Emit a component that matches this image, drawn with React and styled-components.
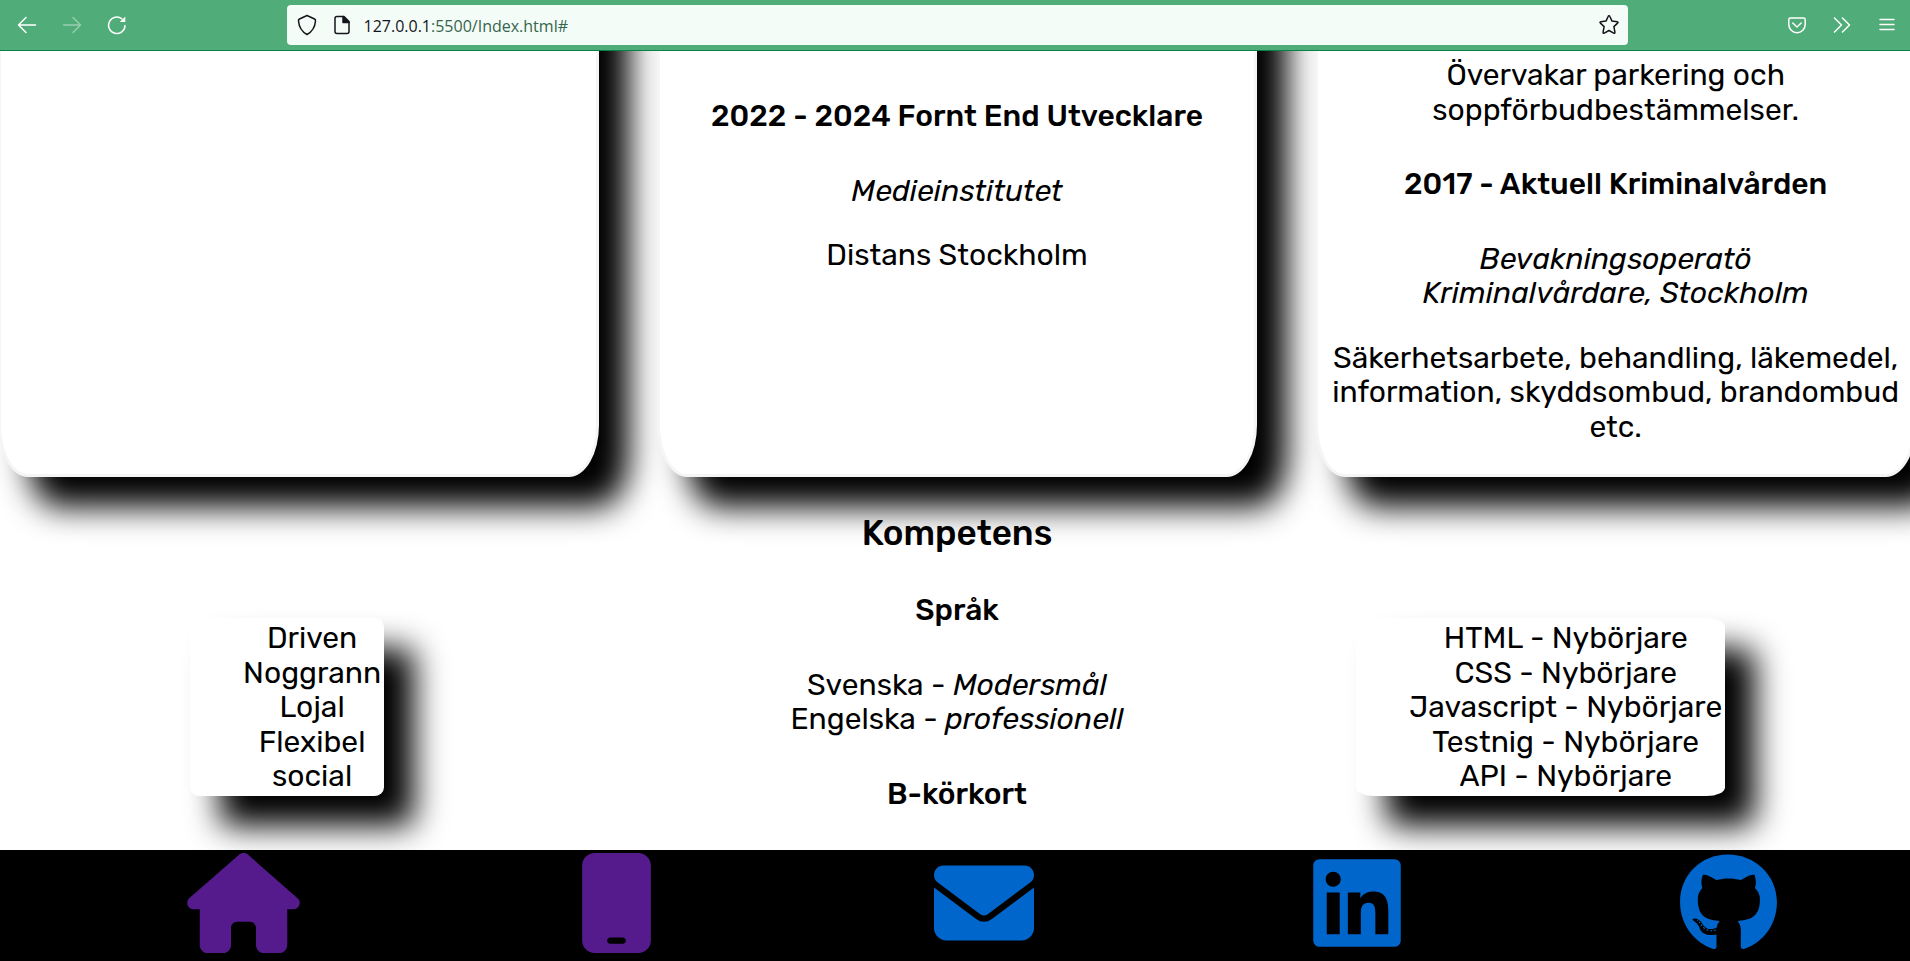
import React from "react";
import styled, { createGlobalStyle } from "styled-components";
import { FaMobile, FaEnvelope, FaLinkedin, FaGithub } from "react-icons/fa6";

const GlobalStyle = createGlobalStyle`
  * { box-sizing: border-box; }
  body {
    margin: 0;
    background: #fff;
    color: #000;
    font-family: Rubik, Inter, "Liberation Sans", sans-serif;
    font-size: 30px;
    line-height: 1.15;
  }
`;

const Window = styled.div`
  display: flex;
  flex-direction: column;
  height: 100vh;
  overflow: hidden;
`;

const Toolbar = styled.header`
  flex: none;
  display: grid;
  grid-template-columns: 15% 1fr 282px;
  height: 51px;
  background: #50ac78;
  border-bottom: 1px solid #0a8043;
  color: #fff;
`;

const ToolGroup = styled.div`
  display: flex;
  align-items: center;
  gap: 21px;
  padding: ${(p) => (p.$end ? "0 11px 0 0" : "0 0 0 15px")};
  justify-content: ${(p) => (p.$end ? "flex-end" : "flex-start")};
`;

const ToolButton = styled.button`
  display: flex;
  align-items: center;
  justify-content: center;
  width: 24px;
  height: 32px;
  padding: 0;
  border: 0;
  background: none;
  color: inherit;
  opacity: ${(p) => (p.disabled ? 0.4 : 1)};
`;

const AddressBar = styled.div`
  display: flex;
  align-items: center;
  gap: 10px;
  height: 40px;
  margin-top: 5px;
  padding: 0 7px;
  border-radius: 4px;
  background: #f4fcf8;
  color: #15141a;
`;

const AddressField = styled.div`
  position: relative;
  flex: 1;
  height: 24px;
  font-family: "Open Sans", "Noto Sans", sans-serif;
  font-size: 16px;
  line-height: 26px;
`;

const AddressInput = styled.input`
  display: block;
  width: 100%;
  padding: 0;
  border: 0;
  outline: 0;
  background: none;
  font: inherit;
`;

const AddressText = styled.div`
  position: absolute;
  inset: 0;
  color: #36654d;
  pointer-events: none;
`;

const Host = styled.span`
  color: #15141a;
`;

const Stroke = styled.svg`
  display: block;
  flex: none;
  fill: none;
  stroke: currentColor;
  stroke-width: 1.5;
  stroke-linecap: round;
  stroke-linejoin: round;
`;

const Main = styled.main`
  flex: 1;
  min-height: 0;
  overflow: hidden;
  text-align: center;
`;

const Cards = styled.section`
  display: grid;
  grid-template-columns: repeat(3, 1fr);
  gap: 58px;
  margin: -614px -6px 0 -2px;
`;

const Card = styled.article`
  min-height: 1040px;
  padding: ${(p) => p.$top}px 10px 0;
  border: 3px solid #f5f5f5;
  border-radius: 5%;
  background: #fff;
  box-shadow: 30px 30px 32px #000;
`;

const Heading = styled.h4`
  margin: 40px 0;
  font-size: inherit;
  font-weight: 500;
`;

const Paragraph = styled.p`
  margin: 30px 0;
`;

const Skills = styled.section`
  display: grid;
  grid-template-columns: 30fr 40fr 21fr 9fr;
  align-items: start;
  margin: 36px -4px 0 0;
`;

const Summary = styled.div`
  grid-column: 2;
`;

const SectionTitle = styled.h3`
  margin: 0;
  font-size: 35px;
  font-weight: 500;
`;

const SkillList = styled.ul`
  justify-self: center;
  margin: 105px 0 0;
  padding: 3px 3px 2px 53px;
  list-style: none;
  border-radius: 5%;
  background: #fff;
  box-shadow: 30px 30px 32px #000;
`;

const Footer = styled.footer`
  flex: none;
  display: flex;
  justify-content: space-between;
  height: 111px;
  padding: 3px 133px 0 187px;
  background: #000;
`;

const FooterLink = styled.a`
  display: block;
  width: ${(p) => p.$width}px;
  height: 100px;
  color: ${(p) => (p.$visited ? "#551a8b" : "#0066cc")};

  svg {
    display: block;
    width: 100%;
    height: 100%;
  }
`;

const House = () => (
  <svg viewBox="0 0 576 512" fill="currentColor">
    <path d="M575.8 255.5c0 18-15 32.1-32 32.1h-32l.7 160.2c0 2.700-.2 5.400-.5 8.100V472c0 22.100-17.900 40-40 40H456c-1.100 0-2.200 0-3.300-.1c-1.400 .1-2.800 .1-4.200 .1H416 392c-22.100 0-40-17.900-40-40V448 384c0-17.700-14.300-32-32-32H256c-17.700 0-32 14.300-32 32v64 24c0 22.100-17.900 40-40 40H160 128.100c-1.500 0-3-.1-4.500-.2c-1.200 .1-2.400 .2-3.600 .2H104c-22.100 0-40-17.900-40-40V360c0-.9 0-1.900 .1-2.800V287.600H32c-18 0-32-14-32-32.100c0-9 3-17 10-24L266.400 8c7-7 15-8 22-8s15 2 21 7L564.800 231.500c8 7 12 15 11 24z" />
  </svg>
);

const traits = ["Driven", "Noggrann", "Lojal", "Flexibel", "social"];
const languages = ["HTML", "CSS", "Javascript", "Testnig", "API"];
const contacts = [
  { label: "Hem", Icon: House, width: 113, visited: true },
  { label: "Telefon", Icon: FaMobile, width: 75, visited: true },
  { label: "E-post", Icon: FaEnvelope, width: 100 },
  { label: "LinkedIn", Icon: FaLinkedin, width: 88 },
  { label: "GitHub", Icon: FaGithub, width: 97 },
];

export default function App() {
  return (
    <Window>
      <GlobalStyle />
      <Toolbar>
        <ToolGroup>
          <ToolButton aria-label="Back">
            <Stroke width="20" height="20" viewBox="0 0 20 20"><path d="M18.500 10H2M9 2.500L1.500 10L9 17.500" /></Stroke>
          </ToolButton>
          <ToolButton aria-label="Forward" disabled>
            <Stroke width="20" height="20" viewBox="0 0 20 20"><path d="M1.500 10H18M11 2.500L18.500 10L11 17.500" /></Stroke>
          </ToolButton>
          <ToolButton aria-label="Reload">
            <Stroke width="20" height="20" viewBox="0 0 20 20"><path d="M18 10.500A8.200 8.200 0 1 1 15 4" /><path d="M18.300 1.500V7H12.800Z" fill="currentColor" stroke="none" /></Stroke>
          </ToolButton>
        </ToolGroup>
        <AddressBar>
          <Stroke width="26" height="24" viewBox="0 0 26 24"><path d="M13 2.500L20.500 6Q21.700 6.600 21.500 8C21 14 18.500 18.500 13 21.500C7.500 18.500 5 14 4.500 8Q4.300 6.600 5.500 6Z" /></Stroke>
          <Stroke width="24" height="24" viewBox="0 0 24 24"><path d="M7 3.500H14L19 8.500V18.500Q19 20.500 17 20.500H7Q5 20.500 5 18.500V5.500Q5 3.500 7 3.500Z" /><path d="M13 3.500V9.500H19Z" fill="currentColor" /></Stroke>
          <AddressField>
            <AddressInput aria-label="Address" defaultValue="" />
            <AddressText><Host>127.0.0.1</Host>:5500/Index.html#</AddressText>
          </AddressField>
          <ToolButton aria-label="Bookmark">
            <Stroke width="22" height="22" viewBox="0 0 22 22"><path d="M11 1.800Q11.600 1.800 11.900 2.500L14 7.100L19.200 7.700Q20.600 8 19.600 9.100L15.900 12.600L16.900 18.200Q17 19.700 15.700 19.100L11 16.500L6.300 19.100Q5 19.700 5.100 18.200L6.100 12.600L2.400 9.100Q1.400 8 2.800 7.700L8 7.100L10.100 2.500Q10.400 1.800 11 1.800Z" /></Stroke>
          </ToolButton>
        </AddressBar>
        <ToolGroup $end>
          <ToolButton aria-label="Save to Pocket">
            <Stroke width="20" height="20" viewBox="0 0 20 20"><path d="M3.500 3H16.500Q18.200 3 18.200 4.700V9.500A8.200 8.200 0 0 1 1.800 9.500V4.700Q1.800 3 3.500 3Z" /><path d="M5.800 8L10 12L14.200 8" /></Stroke>
          </ToolButton>
          <ToolButton aria-label="More tools">
            <Stroke width="20" height="20" viewBox="0 0 20 20"><path d="M2.500 3L9.500 10L2.500 17M10.500 3L17.500 10L10.500 17" /></Stroke>
          </ToolButton>
          <ToolButton aria-label="Menu">
            <Stroke width="20" height="20" viewBox="0 0 20 20"><path d="M3 4.500H17M3 9.500H17M3 14.500H17" /></Stroke>
          </ToolButton>
        </ToolGroup>
      </Toolbar>

      <Main>
        <Cards>
          <Card $top={0} />
          <Card $top={619}>
            <Heading>2022 - 2024 Fornt End Utvecklare</Heading>
            <Paragraph><em>Medieinstitutet</em></Paragraph>
            <Paragraph>Distans Stockholm</Paragraph>
          </Card>
          <Card $top={588}>
            <Paragraph>Övervakar parkering och soppförbudbestämmelser.</Paragraph>
            <Heading>2017 - Aktuell Kriminalvården</Heading>
            <Paragraph><em>Bevakningsoperatö<br />Kriminalvårdare, Stockholm</em></Paragraph>
            <Paragraph>Säkerhetsarbete, behandling, läkemedel, information, skyddsombud, brandombud etc.</Paragraph>
          </Card>
        </Cards>

        <Skills>
          <SkillList>
            {traits.map((trait) => <li key={trait}>{trait}</li>)}
          </SkillList>
          <Summary>
            <SectionTitle>Kompetens</SectionTitle>
            <Heading>Språk</Heading>
            <div>Svenska - <em>Modersmål</em></div>
            <div>Engelska - <em>professionell</em></div>
            <Heading>B-körkort</Heading>
          </Summary>
          <SkillList>
            {languages.map((language) => <li key={language}>{language} - Nybörjare</li>)}
          </SkillList>
        </Skills>
      </Main>

      <Footer>
        {contacts.map(({ label, Icon, width, visited }) => (
          <FooterLink key={label} href="#" aria-label={label} $width={width} $visited={visited}>
            <Icon />
          </FooterLink>
        ))}
      </Footer>
    </Window>
  );
}
